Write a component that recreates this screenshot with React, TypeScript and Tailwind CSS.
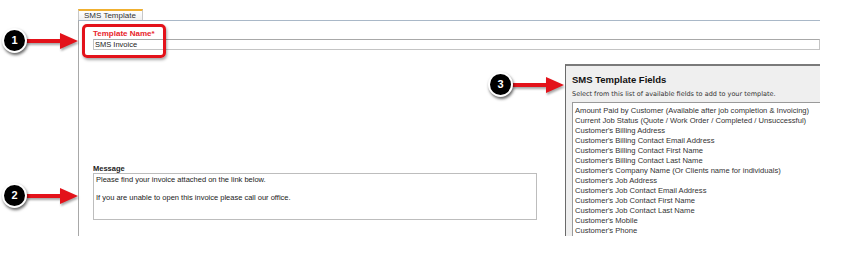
import React from "react";

const fields = [
  "Amount Paid by Customer (Available after job completion & Invoicing)",
  "Current Job Status (Quote / Work Order / Completed / Unsuccessful)",
  "Customer's Billing Address",
  "Customer's Billing Contact Email Address",
  "Customer's Billing Contact First Name",
  "Customer's Billing Contact Last Name",
  "Customer's Company Name (Or Clients name for individuals)",
  "Customer's Job Address",
  "Customer's Job Contact Email Address",
  "Customer's Job Contact First Name",
  "Customer's Job Contact Last Name",
  "Customer's Mobile",
  "Customer's Phone",
];

function Badge({ n, x, y, len }: { n: string; x: number; y: number; len: number }) {
  return (
    <div className="absolute flex items-center" style={{ left: x, top: y }}>
      <div className="w-[25px] h-[25px] rounded-full bg-black border-[2px] border-white shadow-[1px_2px_3px_rgba(0,0,0,0.6)] flex items-center justify-center text-white text-[11px] font-bold z-10" style={{ fontFamily: "'Liberation Sans', Arial, sans-serif" }}>
        {n}
      </div>
      <svg width={len} height={20} viewBox={`0 0 ${len} 20`} className="-ml-[1px]" style={{ filter: "drop-shadow(1px 2px 1px rgba(0,0,0,0.35))" }}>
        <rect x={0} y={8} width={len - 17} height={4} fill="#e3121a" />
        <polygon points={`${len - 18},2 ${len},10 ${len - 18},18`} fill="#e3121a" />
      </svg>
    </div>
  );
}

export default function App() {
  const font = { fontFamily: "Verdana, 'DejaVu Sans', sans-serif" };
  const lib = { fontFamily: "'Liberation Sans', Arial, sans-serif" };
  return (
    <div className="relative w-[855px] h-[262px] bg-white overflow-hidden" style={lib}>
      <div className="pl-[78px] pt-[9px] w-[820px]">
        {/* tab */}
        <div className="w-[65px] h-[11px] border-t-[2px] border-t-[#f0b030] border-x border-x-[#c8c8c8] bg-gradient-to-b from-white to-[#f0f0f0] text-[8px] text-[#333] leading-[9px] pl-[5px]">
          SMS Template
        </div>
        {/* content */}
        <div className="border-t border-t-[#a9b8c8] border-l border-l-[#a8a8a8] h-[216px] flex flex-col">
          <div className="pl-[14px] pt-[9px]">
            <div className="text-[8px] font-bold text-[#e8242a] leading-[8px]">Template Name*</div>
            <div className="mt-[1px] h-[11px] border border-[#c4c4c4] border-t-[#a8a8a8] text-[7.5px] text-[#222] leading-[9px] pl-[1px]">
              SMS Invoice
            </div>
          </div>
          <div className="flex flex-1 mt-[14px]">
            <div className="w-[486px] flex flex-col justify-end pb-[16px] pl-[14px]">
              <div className="text-[7.5px] font-bold text-[#222] leading-[8px]">Message</div>
              <div className="h-[47px] w-[444px] border border-[#bdbdbd] text-[7.5px] text-[#222] leading-[9px] pl-[2px] pt-[1px]">
                <div>Please find your invoice attached on the link below.</div>
                <div className="h-[9px]" />
                <div>If you are unable to open this invoice please call our office.</div>
              </div>
            </div>
            <div className="flex-1 bg-[#efefef] border-t-[2px] border-t-[#7a7a7a] border-l border-l-[#6a6a6a] pl-[6px] pt-[8px] flex flex-col">
              <div className="text-[9.5px] font-bold text-[#111] leading-[12px]">SMS Template Fields</div>
              <div className="text-[6.5px] text-[#333] leading-[8px] mt-[4px]" style={font}>Select from this list of available fields to add to your template.</div>
              <div className="flex-1 mt-[4px] bg-white border-t border-l border-[#9a9a9a] pl-[2px] pt-[3px] overflow-hidden">
                {fields.map((f) => (
                  <div key={f} className="text-[7.6px] leading-[10px] text-[#333] whitespace-nowrap">{f}</div>
                ))}
              </div>
            </div>
          </div>
        </div>
      </div>

      {/* annotations */}
      <div className="absolute left-[82px] top-[24px] w-[84px] h-[34px] rounded-[5px] border-[3px] border-[#e3121a] shadow-[1px_2px_3px_rgba(0,0,0,0.35)]" />
      <Badge n="1" x={2} y={28} len={52} />
      <Badge n="2" x={2} y={183} len={52} />
      <Badge n="3" x={488} y={72} len={52} />
    </div>
  );
}
